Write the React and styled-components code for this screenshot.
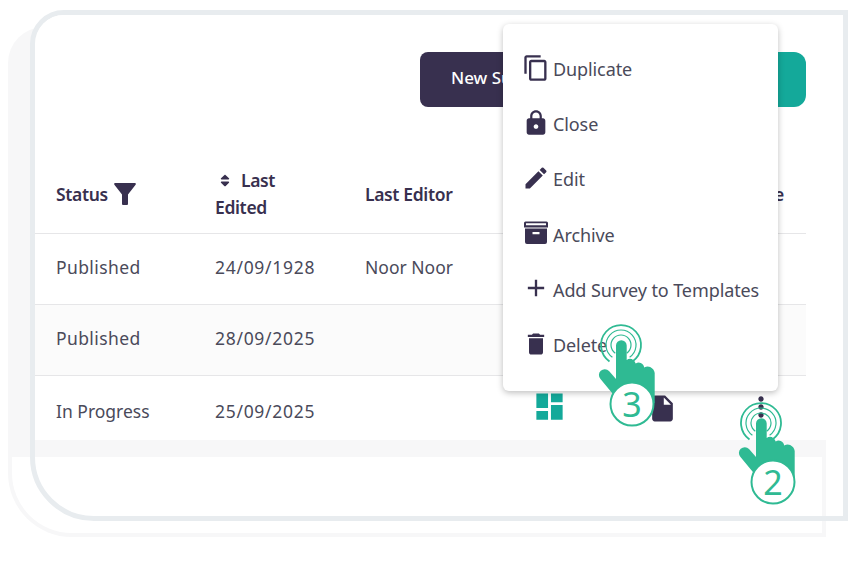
import React from 'react';
import styled, { createGlobalStyle } from 'styled-components';
import { MdContentCopy, MdLock, MdEdit, MdAdd, MdDelete, MdDashboard, MdInsertDriveFile, MdMoreVert } from 'react-icons/md';
import { FaSort } from 'react-icons/fa';

const Global = createGlobalStyle`
  html, body { margin: 0; padding: 0; background: #fff; }
  body { font-family: "Noto Sans", "Open Sans", sans-serif; }
`;

const DARK = '#38304f';
const TEAL = '#14a99a';
const GREEN = '#2fba93';
const TEXT = '#4a4a5a';
const MIST = '#f7f7f8';

const Stage = styled.div`
  position: relative;
  width: 859px;
  height: 562px;
  overflow: hidden;
  background: #fff;
`;
const Backdrop = styled.div`
  position: absolute;
  left: 8px;
  top: 27px;
  width: 818px;
  height: 510px;
  background: ${MIST};
  border-radius: 36px 0 0 64px;
`;
const BackdropCutout = styled.div`
  position: absolute;
  left: 4px;
  right: 4px;
  bottom: 4px;
  top: 430px;
  background: #fff;
  border-radius: 0 0 0 60px;
`;
const Frame = styled.div`
  position: relative;
  box-sizing: border-box;
  margin: 10px 11px 0 30px;
  width: 818px;
  height: 511px;
  border: 5px solid #e8ecef;
  border-radius: 34px 0 0 64px;
  display: flex;
  flex-direction: column;
  overflow: hidden;
`;
const Panel = styled.div`
  background: #fff;
  height: 425px;
  padding-right: 37px;
  display: flex;
  flex-direction: column;
`;
const Band = styled.div`
  height: 17px;
  width: 791px;
  background: ${MIST};
`;
const Toolbar = styled.div`
  display: flex;
  justify-content: flex-end;
  padding-top: 37px;
  height: 98px;
  box-sizing: border-box;
`;
const ToolButton = styled.button`
  border: 0;
  height: 55px;
  width: ${p => p.$w}px;
  background: ${p => p.$bg};
  color: #fff;
  font: 500 17px "Noto Sans", sans-serif;
  text-align: left;
  padding: 0 0 4px 31px;
  border-radius: ${p => p.$radius};
`;
const Row = styled.div`
  display: grid;
  grid-template-columns: 159px 150px 140px 115px 110px 1fr;
  padding-left: 21px;
  align-items: center;
  box-sizing: border-box;
  height: ${p => p.$h}px;
  background: ${p => p.$bg || 'transparent'};
  border-bottom: ${p => (p.$line ? '1px solid #e6e6e8' : '0')};
  padding-bottom: ${p => p.$pb || 0}px;
  padding-top: ${p => p.$pt || 0}px;
`;
const HeadCell = styled.div`
  font-size: 17.5px;
  font-weight: 600;
  line-height: 27px;
  letter-spacing: -0.35px;
  color: ${DARK};
  display: flex;
  align-items: center;
  gap: 6px;
  justify-content: ${p => (p.$right ? 'flex-end' : 'flex-start')};
  padding-right: ${p => (p.$right ? '22px' : '0')};
`;
const HeadStack = styled.div`
  display: block;
`;
const SortIcon = styled(FaSort)`
  width: 12px;
  height: 15px;
  margin: 0 10px 3px 4px;
  vertical-align: middle;
  color: ${DARK};
`;
const FunnelIcon = styled.svg`
  width: 22px;
  height: 22px;
  fill: ${DARK};
  flex: none;
`;
const Cell = styled.div`
  font-size: 17.5px;
  letter-spacing: ${p => p.$track || 0}px;
  color: ${TEXT};
`;
const IconCell = styled.div`
  display: flex;
  align-items: center;
  justify-content: ${p => p.$justify || 'flex-start'};
  color: ${p => p.$color};
  padding-left: ${p => p.$pl || 0}px;
  padding-right: ${p => p.$pr || 0}px;
  margin-bottom: ${p => p.$mb ?? 8}px;
`;
const Menu = styled.div`
  position: absolute;
  left: 503px;
  top: 24px;
  width: 275px;
  height: 367px;
  box-sizing: border-box;
  padding: 17.5px 0 18px 19px;
  background: #fff;
  border-radius: 6px;
  box-shadow: 0 2px 6px rgba(0, 0, 0, 0.25);
  display: flex;
  flex-direction: column;
`;
const MenuItem = styled.div`
  height: 55.2px;
  display: flex;
  align-items: center;
  gap: 3px;
  font-size: 18px;
  letter-spacing: -0.1px;
  color: ${TEXT};
  svg { width: 28px; height: 28px; color: ${DARK}; flex: none; margin-bottom: 3px; }
`;
const HandWrap = styled.svg`
  position: absolute;
  left: ${p => p.$x}px;
  top: ${p => p.$y}px;
  overflow: visible;
`;

const ArchiveIcon = () => (
  <svg viewBox="0 0 28 28" fill="currentColor">
    <path fillRule="evenodd" d="M3.5 2.5h21A1.5 1.5 0 0 1 26 4v4.5H2V4a1.5 1.5 0 0 1 1.5-1.500ZM4 4.300v2h20v-2Z" />
    <path fillRule="evenodd" d="M3 9.500h22V23a2 2 0 0 1-2 2H5a2 2 0 0 1-2-2ZM10.500 13v2.200h7V13Z" />
  </svg>
);

const Hand = ({ x, y, n, cx = 36 }) => (
  <HandWrap $x={x} $y={y} width="62" height="106" viewBox="0 0 62 106">
    <g fill="none" stroke={GREEN}>
      <path d="M12.5 38.4A20 20 0 1 1 35.5 38.4" strokeWidth="1.8" />
      <path d="M15.4 34.3A15 15 0 1 1 32.6 34.3" strokeWidth="1.2" />
      <path d="M18.3 30.2A10 10 0 1 1 29.7 30.2" strokeWidth="1.2" />
    </g>
    <path
      fill={GREEN}
      d="M19 22.5a5.3 5.3 0 0 1 10.7 0V37q2.5-2 5-1 3 1 4 4.5 2.500-1.500 5-.5 3 1 3.500 4.500 3-1.500 6-.5 4 2 4.500 6V80L32 96 20 76 3.500 56a5.500 5.500 0 0 1 8.500-8L19 56Z"
    />
    <circle cx={cx} cy="81" r="21.5" fill="#fff" stroke={GREEN} strokeWidth="2" />
    <text x={cx} y="93.500" textAnchor="middle" fontFamily="Noto Sans, sans-serif" fontSize="34" fill={GREEN}>{n}</text>
  </HandWrap>
);

const items = [
  [MdContentCopy, 'Duplicate'],
  [MdLock, 'Close'],
  [MdEdit, 'Edit'],
  [ArchiveIcon, 'Archive'],
  [MdAdd, 'Add Survey to Templates'],
  [MdDelete, 'Delete'],
];

export default function App() {
  return (
    <Stage>
      <Global />
      <Backdrop><BackdropCutout /></Backdrop>
      <Frame>
        <Panel>
          <Toolbar>
            <ToolButton $w={210} $bg={DARK} $radius="8px 0 0 8px">New Survey</ToolButton>
            <ToolButton $w={176} $bg={TEAL} $radius="0 12px 12px 0">Templates</ToolButton>
          </Toolbar>
          <Row $h={121} $line $pt={42}>
            <HeadCell>Status
              <FunnelIcon viewBox="0 0 22 22"><path d="M1.200 0h19.600c.9 0 1.400 1 .8 1.700L14 11.500V21a1 1 0 0 1-1 1H9a1 1 0 0 1-1-1v-9.500L.4 1.700C-.2 1 .3 0 1.200 0Z" /></FunnelIcon>
            </HeadCell>
            <HeadCell><HeadStack><SortIcon />Last<br />Edited</HeadStack></HeadCell>
            <HeadCell>Last Editor</HeadCell>
            <HeadCell>Type</HeadCell>
            <HeadCell>File</HeadCell>
            <HeadCell $right>More</HeadCell>
          </Row>
          <Row $h={71} $line $pb={4}>
            <Cell $track={0.4}>Published</Cell><Cell $track={0.7}>24/09/1928</Cell><Cell>Noor Noor</Cell>
          </Row>
          <Row $h={71} $line $bg="#fbfbfb" $pb={4}>
            <Cell $track={0.4}>Published</Cell><Cell $track={0.7}>28/09/2025</Cell>
          </Row>
          <Row $h={64} $pt={5}>
            <Cell>In Progress</Cell><Cell $track={0.7}>25/09/2025</Cell><Cell />
            <IconCell $color={TEAL} $pl={27}><MdDashboard size={35} /></IconCell>
            <IconCell $color={DARK} $pl={27} $mb={4}><MdInsertDriveFile size={31} /></IconCell>
            <IconCell $color={DARK} $justify="flex-end" $pr={29}><MdMoreVert size={32} /></IconCell>
          </Row>
        </Panel>
        <Band />
      </Frame>
      <Menu>
        {items.map(([Icon, label]) => (
          <MenuItem key={label}><Icon />{label}</MenuItem>
        ))}
      </Menu>
      <Hand x={597} y={323} n="3" cx={35} />
      <Hand x={737} y={401} n="2" />
    </Stage>
  );
}
